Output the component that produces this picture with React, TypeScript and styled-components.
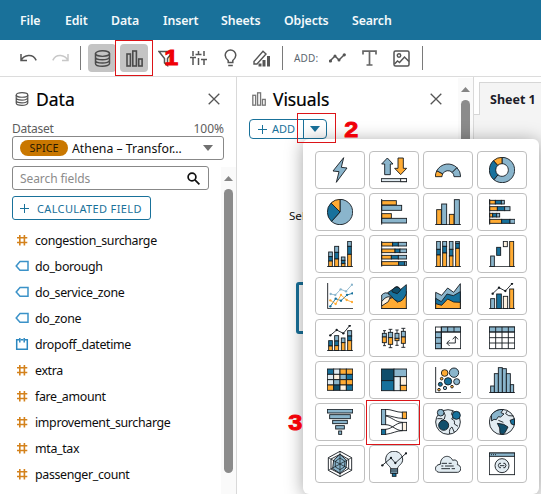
import React from "react";
import styled, { createGlobalStyle } from "styled-components";

const L = "#8ab5cc";
const D = "#17719c";
const N = "#104e6b";
const O = "#ffab33";
const W = "#e2ecf2";
const C = "#fdf1e0";
const K = "#151b20";
const blue = "#19719a";

const Global = createGlobalStyle`
  * { box-sizing: border-box; }
  body { margin: 0; background: #fff; font-family: "Noto Sans", "Open Sans", sans-serif; overflow: hidden; }
`;

const Page = styled.div`
  position: relative;
  width: 541px;
  height: 494px;
  display: flex;
  flex-direction: column;
  overflow: hidden;
  color: #0d0d0d;
`;
const MenuBar = styled.nav`
  height: 40px;
  flex: none;
  background: ${blue};
  display: flex;
  align-items: center;
  padding: 2px 0 0 20px;
`;
const MenuItem = styled.span<{ $w: number }>`
  width: ${(p) => p.$w}px;
  flex: none;
  font-size: 12.3px;
  font-weight: 600;
  line-height: 18px;
  letter-spacing: -0.1px;
  color: #f4f9fb;
`;
const Toolbar = styled.div`
  height: 37px;
  flex: none;
  border-bottom: 1px solid #dcdcdc;
  display: flex;
  align-items: center;
  padding-left: 16px;
`;
const Tool = styled.span<{ $w: number; $on?: boolean; $gap?: number }>`
  width: ${(p) => p.$w}px;
  height: 28px;
  flex: none;
  margin-right: ${(p) => p.$gap ?? 0}px;
  border-radius: 4px;
  display: flex;
  align-items: center;
  justify-content: center;
  background: ${(p) => (p.$on ? "#c4c4c4" : "transparent")};
`;
const Rule = styled.span<{ $gap: number }>`
  width: 1px;
  height: 24px;
  background: #7a7a7a;
  margin-right: ${(p) => p.$gap}px;
`;
const AddLabel = styled.span`
  width: 34px;
  font-size: 10px;
  letter-spacing: 0.2px;
  color: #5c6670;
`;
const Body = styled.div`
  flex: 1;
  display: flex;
  min-height: 0;
`;
const Panel = styled.section<{ $w: number }>`
  position: relative;
  width: ${(p) => p.$w}px;
  flex: none;
  border-right: 1px solid #d9d9d9;
`;
const PanelHead = styled.header<{ $pad: string }>`
  height: 44px;
  display: flex;
  align-items: center;
  padding: ${(p) => p.$pad};
`;
const Title = styled.h2<{ $ls: number }>`
  margin: 0 auto 0 7px;
  font-size: 17.5px;
  font-weight: 400;
  line-height: 24px;
  letter-spacing: ${(p) => p.$ls}px;
  color: #000;
  -webkit-text-stroke: 0.2px #000;
`;
const DatasetLine = styled.div`
  display: flex;
  justify-content: space-between;
  padding: 0 12px;
  height: 15px;
  font-size: 12px;
  line-height: 15px;
  color: #5d5d5d;
`;
const DatasetLabel = styled.span`
  letter-spacing: -0.25px;
`;
const Select = styled.div`
  margin: 0 12px;
  height: 24px;
  border: 1px solid #888;
  border-radius: 3px;
  display: flex;
  align-items: center;
  padding: 0 10px 0 7px;
  font-size: 12.3px;
`;
const Spice = styled.span`
  width: 48px;
  height: 16px;
  border-radius: 8px;
  background: #c97700;
  color: #2b1a00;
  font-size: 10.8px;
  line-height: 15px;
  text-align: center;
  margin-right: 4px;
`;
const Chosen = styled.span`
  flex: 1;
  white-space: nowrap;
`;
const Search = styled.div`
  margin: 6px 0 6px 12px;
  width: 197px;
  height: 24px;
  border: 1px solid #888;
  border-radius: 3px;
  display: flex;
  align-items: center;
  justify-content: space-between;
  padding: 0 8px 0 7px;
  font-size: 12px;
  letter-spacing: -0.08px;
  color: #8b8b8b;
`;
const Outlined = styled.button`
  margin: 0 0 0 12px;
  width: 139px;
  height: 24px;
  border: 1px solid ${blue};
  border-radius: 3px;
  background: #fff;
  color: ${blue};
  padding: 0 0 0 7px;
  display: flex;
  align-items: center;
  font: 11px "Noto Sans", sans-serif;
  letter-spacing: 0.36px;
  white-space: nowrap;
`;
const Plus = styled.svg`
  margin-right: 8px;
  flex: none;
`;
const Fields = styled.ul`
  list-style: none;
  margin: 0;
  padding: 7px 0 0 15px;
`;
const Field = styled.li`
  height: 26px;
  display: flex;
  align-items: center;
  gap: 6px;
  font-size: 12.4px;
  letter-spacing: -0.34px;
`;
const ScrollTrack = styled.div<{ $top: number }>`
  position: absolute;
  right: 0;
  top: ${(p) => p.$top}px;
  bottom: 0;
  width: 15px;
  background: #fafafa;
  display: flex;
  flex-direction: column;
  align-items: center;
`;
const Thumb = styled.div<{ $h: number }>`
  width: 9px;
  flex: none;
  height: ${(p) => p.$h}px;
  margin-top: 8px;
  border-radius: 5px;
  background: #8b8b8b;
`;
const SplitButton = styled.div`
  margin: -2px 0 0 12px;
  width: 78px;
  height: 20px;
  border: 1px solid ${blue};
  border-radius: 4px;
  display: flex;
  align-items: center;
  color: ${blue};
  font-size: 11px;
`;
const SplitMain = styled.span`
  width: 54px;
  height: 18px;
  line-height: 18px;
  border-right: 1px solid ${blue};
  display: flex;
  align-items: center;
  padding-left: 8px;
  gap: 5px;
`;
const SplitDrop = styled.span`
  flex: 1;
  display: flex;
  justify-content: center;
`;
const Hint = styled.p`
  margin: 68px 0 0 52px;
  font-size: 11.6px;
  line-height: 18px;
`;
const EmptyVisual = styled.div`
  margin: 57px 0 0 59px;
  width: 150px;
  height: 52px;
  border: 3px solid ${blue};
  border-radius: 3px;
`;
const SheetArea = styled.main`
  flex: 1;
  display: flex;
  flex-direction: column;
  background: #f4f4f4;
`;
const TabStrip = styled.div`
  height: 38px;
  display: flex;
  background: #fff;
  align-items: flex-end;
`;
const TabLead = styled.div`
  width: 5px;
  height: 1px;
  background: #d6d6d6;
`;
const Tab = styled.div`
  flex: 1;
  height: 33px;
  background: #f4f4f4;
  border: solid #d6d6d6;
  border-width: 1px 0 0 1px;
  padding-left: 10px;
  font-size: 12.5px;
  font-weight: 700;
  line-height: 33px;
  white-space: nowrap;
  color: #1c1c28;
`;
const Picker = styled.div`
  position: absolute;
  left: 303px;
  top: 139px;
  width: 236px;
  height: 355px;
  background: #fff;
  border-radius: 6px;
  box-shadow: 0 2px 18px rgba(0, 0, 0, 0.36);
  padding: 12px;
  display: grid;
  grid-template-columns: repeat(4, 50px);
  grid-auto-rows: 38px;
  gap: 4px;
  align-content: start;
`;
const Choice = styled.button`
  border: 1px solid #bfbfbf;
  border-radius: 4px;
  background: #fff;
  padding: 0;
  display: flex;
  align-items: center;
  justify-content: center;
`;
const Mark = styled.div<{ $x: number; $y: number; $w: number; $h: number }>`
  position: absolute;
  left: ${(p) => p.$x}px;
  top: ${(p) => p.$y}px;
  width: ${(p) => p.$w}px;
  height: ${(p) => p.$h}px;
  border: 1px solid #dc1418;
`;
const Step = styled.span<{ $x: number; $y: number }>`
  position: absolute;
  left: ${(p) => p.$x}px;
  top: ${(p) => p.$y}px;
  font: bold 22.5px/24px "Liberation Sans", Arial, sans-serif;
  color: #f00008;
  -webkit-text-stroke: 0.9px #f00008;
  transform: scaleX(1.12);
`;

const Database = ({ s, c }: { s: number; c: string }) => (
  <svg width={s} height={s} viewBox="0 0 16 16" fill="none" stroke={c} strokeWidth="1.4">
    <ellipse cx="8" cy="3.4" rx="6.6" ry="2.6" />
    <path d="M1.4 3.4v9.2c0 3.5 13.2 3.5 13.2 0V3.4M1.4 6.6c0 3.5 13.2 3.5 13.2 0M1.4 9.7c0 3.5 13.2 3.5 13.2 0" />
  </svg>
);
const Bars = ({ w, h, c }: { w: number; h: number; c: string }) => (
  <svg width={w} height={h} viewBox="0 0 17 17" fill="none" stroke={c} strokeWidth="1.6">
    <rect x="1" y="4" width="3.4" height="12" />
    <rect x="6.8" y="1" width="3.6" height="15" />
    <rect x="12.7" y="9" width="3.4" height="7" />
  </svg>
);
const Close = () => (
  <svg width="12" height="12" viewBox="0 0 12 12" stroke="#555" strokeWidth="1.3">
    <path d="M.7.7l10.6 10.6M11.3.7L.7 11.3" />
  </svg>
);
const Undo = ({ flip }: { flip?: boolean }) => (
  <svg width="17" height="10" viewBox="0 0 17 10" fill="none" stroke={flip ? "#c8c8c8" : "#555"} strokeWidth="1.5">
    <g transform={flip ? "translate(17 0) scale(-1 1)" : undefined}>
      <path d="M1 1v6.600h6M1.200 7.200C4 1.800 12.800 0 16.200 7.400" />
    </g>
  </svg>
);
const Caret = ({ w, h, c }: { w: number; h: number; c: string }) => (
  <svg width={w} height={h} viewBox="0 0 10 6" preserveAspectRatio="none" fill={c}>
    <path d="M0 0h10L5 6z" />
  </svg>
);
const ScrollUp = () => (
  <svg width="9" height="14" viewBox="0 0 9 14" fill="#858585">
    <path d="M0 14l4.500-5 4.500 5z" />
  </svg>
);

const FieldIcon = ({ kind }: { kind: string }) => {
  if (kind === "num")
    return (
      <svg width="14" height="14" viewBox="0 0 14 14" stroke="#d4821c" strokeWidth="1.6">
        <path d="M4.800 2v10.500M9.400 2v10.500M2 4.800h10.300M2 9.500h10.300" />
      </svg>
    );
  if (kind === "text")
    return (
      <svg width="14" height="14" viewBox="0 0 14 14" fill="none" stroke="#3b92c8" strokeWidth="1.5">
        <path d="M5 2.600h8v8.600H5L1.200 6.900z" />
      </svg>
    );
  return (
    <svg width="14" height="14" viewBox="0 0 14 14" fill="none" stroke="#2c88c0" strokeWidth="1.5">
      <path d="M4 2.800H1.700v9.500h10.600V2.800H10M5.800 2.800h2.400M4.800 1v4.400M9.200 1v4.400" />
    </svg>
  );
};

type Box = [number, number, number, number, string];
const Rects = ({ items }: { items: Box[] }) => (
  <>
    {items.map(([x, y, w, h, f], i) => (
      <rect key={i} x={x} y={y} width={w} height={h} fill={f} />
    ))}
  </>
);
const arc = (r0: number, r1: number, a: number, b: number, cx = 39, cy = 39) => {
  const pt = (r: number, t: number) =>
    `${cx + r * Math.sin((t * Math.PI) / 180)} ${cy - r * Math.cos((t * Math.PI) / 180)}`;
  const big = b - a > 180 ? 1 : 0;
  return `M${pt(r1, a)}A${r1} ${r1} 0 ${big} 1 ${pt(r1, b)}L${pt(r0, b)}A${r0} ${r0} 0 ${big} 0 ${pt(r0, a)}Z`;
};
const Dots = ({ pts, c, r = 3.5 }: { pts: string; c: string; r?: number }) => (
  <>
    <polyline points={pts} stroke={c} fill="none" />
    {pts.split(" ").map((p) => {
      const [x, y] = p.split(",");
      return <circle key={p} cx={x} cy={y} r={r} fill={c} stroke="none" />;
    })}
  </>
);
const Base = () => <path d="M0 77H78" />;
const Axis = () => <path d="M2 0V77H78" fill="none" />;

const heat = [D, W, O, O, W, C, L, D, W, L, O, O, O, N, C, D];

const charts: React.ReactNode[] = [
  <polygon points="50,2 18,42 36,44 28,76 60,33 43,31" fill={L} />,
  <>
    <path d="M19 3L36 21H28V53H11V21H2z" fill={L} />
    <path d="M51 3h16v31h10L59 53 41 34h10z" fill={O} />
    <Rects items={[[1, 65, 76, 9, W], [59, 65, 18, 9, "#fff"]]} />
  </>,
  <>
    <path d={arc(18, 38, 270, 298, 39, 59)} fill={O} />
    <path d={arc(18, 38, 298, 405, 39, 59)} fill={L} />
    <path d={arc(18, 38, 45, 90, 39, 59)} fill={L} />
  </>,
  <>
    <path d={arc(19, 38, 0, 220)} fill={L} />
    <path d={arc(19, 38, 220, 318)} fill={D} />
    <path d={arc(19, 38, 318, 360)} fill={O} />
  </>,
  <>
    <path d={arc(0, 38, 0, 222)} fill={L} />
    <path d={arc(0, 38, 222, 315)} fill={D} />
    <path d={arc(0, 38, 315, 360)} fill={O} />
  </>,
  <>
    <Rects items={[[2, 5, 44, 13, O], [2, 19, 60, 15, L], [2, 44, 29, 14, O], [2, 58, 75, 14, L]]} />
    <path d="M2 0V77" />
  </>,
  <>
    <Rects items={[[5, 32, 14, 45, O], [20, 15, 15, 62, L], [43, 46, 14, 31, O], [58, 2, 15, 75, L]]} />
    <Base />
  </>,
  <>
    <Rects items={[[2, 4, 17, 11, O], [19, 4, 18, 11, D], [37, 4, 9, 11, L], [2, 23, 23, 12, O], [25, 23, 22, 12, D], [47, 23, 16, 12, L], [2, 43, 9, 11, O], [11, 43, 12, 11, D], [23, 43, 9, 11, L], [2, 61, 36, 12, O], [38, 61, 25, 12, D], [63, 61, 15, 12, L]]} />
    <path d="M2 0V77" />
  </>,
  <>
    <Rects items={[[5, 33, 11, 14, L], [5, 47, 11, 14, D], [5, 60, 11, 17, O], [23, 16, 12, 18, L], [23, 34, 12, 20, D], [23, 54, 12, 23, O], [43, 48, 11, 10, L], [43, 58, 11, 10, D], [43, 68, 11, 9, O], [62, 1, 11, 15, L], [62, 16, 11, 24, D], [62, 40, 11, 37, O]]} />
    <Base />
  </>,
  <>
    <Rects items={[[2, 4, 33, 11, O], [35, 4, 17, 11, D], [52, 4, 25, 11, L], [2, 24, 40, 11, O], [42, 24, 15, 11, D], [57, 24, 20, 11, L], [2, 43, 29, 11, O], [31, 43, 21, 11, D], [52, 43, 25, 11, L], [2, 62, 51, 11, O], [53, 62, 18, 11, D], [71, 62, 6, 11, L]]} />
    <path d="M2 0V77" />
  </>,
  <>
    <Rects items={[[5, 1, 11, 24, L], [5, 25, 11, 17, D], [5, 42, 11, 35, O], [23, 1, 12, 15, L], [23, 16, 12, 20, D], [23, 36, 12, 41, O], [43, 1, 11, 24, L], [43, 25, 11, 20, D], [43, 45, 11, 32, O], [62, 1, 11, 6, L], [62, 7, 11, 15, D], [62, 22, 11, 55, O]]} />
    <Base />
  </>,
  <>
    <Rects items={[[5, 45, 11, 32, L], [23, 19, 12, 24, D], [43, 1, 12, 16, C], [62, 1, 12, 76, O]]} />
    <Base />
  </>,
  <>
    <Axis />
    <Dots pts="11,33 25,36 41,19 57,25 75,5" c={L} />
    <Dots pts="10,70 26,47 42,53 60,36 76,31" c={D} />
    <Dots pts="10,52 26,63 42,36 59,51 75,57" c={O} />
  </>,
  <>
    <path d="M2 77V56L19 48 35 44 50 58 76 25V77z" fill={O} />
    <path d="M2 56V36Q14 24 24 34L32 43 19 48z" fill={L} />
    <path d="M20 29L38 17Q50 3 58 20L76 5V32Q66 56 52 56Q39 53 29 37z" fill={D} />
    <path d="M33 22Q46 4 60 20L49 32 34 27z" fill={N} />
    <path d="M2 56Q15 38 28 42L22 56 2 69z" fill={C} />
    <Base />
  </>,
  <>
    <path d="M2 28L20 37 38 15 56 28 76 2V65L2 77z" fill={L} />
    <path d="M2 46L19 56 36 33 55 38 76 26V77H2z" fill={D} />
    <path d="M2 62L20 67 38 48 56 57 76 58V77H2z" fill={O} />
    <Base />
  </>,
  <>
    <Rects items={[[5, 47, 12, 30, L], [23, 33, 14, 44, D], [43, 40, 13, 37, C], [62, 18, 12, 59, O]]} />
    <Dots pts="11,32 30,14 49,24 69,2" c={K} />
    <Base />
  </>,
  <>
    <Rects items={[[5, 47, 11, 16, D], [5, 63, 11, 14, O], [23, 32, 12, 16, L], [23, 48, 12, 14, D], [23, 62, 12, 15, O], [43, 39, 11, 14, L], [43, 53, 11, 24, O], [62, 17, 12, 16, L], [62, 33, 12, 14, D], [62, 47, 12, 30, O]]} />
    <Dots pts="10,31 29,15 49,25 68,2" c={K} />
    <Base />
  </>,
  <>
    <path d="M10 17V62M28 13V68M48 15V61M67 10V67M6 17h9M23 13h11M43 15h10M61 10h12M6 62h9M23 68h11M43 61h10M61 67h12" />
    <Rects items={[[4, 25, 12, 11, L], [4, 36, 12, 17, O], [22, 22, 13, 16, L], [22, 38, 13, 20, O], [42, 25, 12, 15, L], [42, 40, 12, 7, O], [61, 19, 12, 17, L], [61, 36, 12, 19, O]]} />
  </>,
  <>
    <Rects items={[[1, 6, 76, 65, "#fff"], [19, 6, 58, 15, L], [1, 21, 18, 50, L]]} />
    <path d="M19 6V71M38 6V21M57 6V21M1 21H77M1 38H19M1 55H19M61 35V54H36M53 43L61 34 69 43M44 46L35 54 44 63" fill="none" />
  </>,
  <>
    <Rects items={[[1, 6, 76, 65, "#fff"], [1, 6, 76, 15, L]]} />
    <path d="M1 21H77M1 38H77M1 54H77M20 6V71M39 6V71M58 6V71" />
  </>,
  <Rects items={heat.map((f, i) => [1 + (i % 4) * 19, 6 + Math.floor(i / 4) * 16, 19, 16, f] as Box)} />,
  <Rects items={[[1, 6, 38, 35, N], [1, 41, 38, 30, D], [39, 6, 38, 23, L], [39, 29, 19, 42, W], [58, 29, 19, 26, C], [58, 55, 19, 16, O]]} />,
  <>
    <Axis />
    {([[29, 18, 10, O], [57, 17, 14, L], [20, 35, 4, O], [39, 43, 11, D], [65, 44, 9, L], [16, 52, 6, D], [30, 63, 5, L], [51, 59, 4, O], [12, 68, 4, O]] as [number, number, number, string][]).map(([x, y, r, f]) => (
      <circle key={`${x}-${y}`} cx={x} cy={y} r={r} fill={f} />
    ))}
  </>,
  <>
    <Rects items={[[5, 57, 11, 20, L], [16, 20, 12, 57, L], [28, 2, 12, 75, L], [40, 5, 12, 72, L], [52, 20, 12, 57, L], [64, 53, 10, 24, L]]} />
    <Base />
  </>,
  <Rects items={[[1, 1, 76, 11, L], [8, 17, 62, 12, L], [17, 34, 44, 10, L], [26, 50, 26, 10, L], [35, 66, 9, 10, L]]} />,
  <>
    <path d="M14 1C32 1 46 10 64 10M14 19C34 21 46 28 64 28M14 21C32 24 44 40 64 40M14 47C34 47 44 65 64 65M14 61C34 60 44 41 64 41M14 76C34 74 46 65 64 65" fill="none" />
    <Rects items={[[1, 1, 13, 46, L], [1, 61, 13, 16, D], [64, 9, 13, 20, O], [64, 40, 13, 25, C]]} />
  </>,
  <>
    <circle cx="39" cy="39" r="37" fill={W} />
    <path d="M25 7Q35 19 28 30L17 36M53 5Q45 17 55 23L50 30Q61 33 58 45L69 52M44 75Q41 59 51 54L58 70M7 29L22 29" fill="none" />
    <circle cx="17" cy="11" r="10" fill={L} />
    <circle cx="64" cy="19" r="12" fill={D} />
    <circle cx="26" cy="49" r="15" fill={N} />
  </>,
  <>
    <circle cx="39" cy="39" r="38" fill={W} />
    <path d="M7 18Q19 1 43 1L36 11 45 15 35 24 28 23 22 32 15 31 8 36z" fill={L} />
    <path d="M25 43L44 46 57 54 49 69 43 76 33 73 32 57z" fill={N} />
    <path d="M77 29L63 34 67 45 76 48z" fill={D} />
    <path d="M55 5L50 14 59 20 74 21M28 34l15 6" fill="none" />
  </>,
  <>
    <path d="M39 1L74 20V58L39 77 4 58V20zM39 10L65 25V53L39 68 12 54V24z" fill="#fff" />
    <path d="M39 10L59 28 57 51 39 67 17 53 20 27z" fill={L} />
    <path d="M39 1V77M4 20L74 58M74 20L4 58M39 21L54 31 52 48 39 56 25 48V31z" fill="none" strokeWidth="2.200" />
  </>,
  <>
    <path d="M30 54C27 43 12 40 14 24C17-7 61-7 65 24C66 40 51 42 49 54z" fill={W} />
    <Rects items={[[29, 54, 21, 13, L], [34, 67, 11, 9, D]]} />
    <path d="M29 60H50" />
    <Dots pts="4,43 30,21 43,36 75,7" c={K} />
  </>,
  <>
    <path d="M14 64C-3 64-3 41 16 40C16 14 44 8 53 28C64 24 70 32 67 41C81 43 80 64 67 64z" fill={W} />
    <path d="M20 37H36M41 37H50M19 45H25M30 45H56M19 53H45M50 53H60" />
  </>,
  <>
    <Rects items={[[1, 6, 76, 65, "#fff"], [1, 6, 76, 10, L]]} />
    <circle cx="39" cy="44" r="21" fill={W} />
    <path d="M6 11h3M12 11h3M18 11h3M36 37h-5Q25 43 31 50h5M43 37h5Q54 43 48 50h-5M33 44H46" fill="none" />
  </>,
];

const fields: [string, string][] = [
  ["num", "congestion_surcharge"],
  ["text", "do_borough"],
  ["text", "do_service_zone"],
  ["text", "do_zone"],
  ["date", "dropoff_datetime"],
  ["num", "extra"],
  ["num", "fare_amount"],
  ["num", "improvement_surcharge"],
  ["num", "mta_tax"],
  ["num", "passenger_count"],
];

export default function App() {
  return (
    <>
      <Global />
      <Page>
        <MenuBar>
          <MenuItem $w={45}>File</MenuItem>
          <MenuItem $w={46}>Edit</MenuItem>
          <MenuItem $w={52}>Data</MenuItem>
          <MenuItem $w={58}>Insert</MenuItem>
          <MenuItem $w={63}>Sheets</MenuItem>
          <MenuItem $w={68}>Objects</MenuItem>
          <MenuItem $w={50}>Search</MenuItem>
        </MenuBar>
        <Toolbar>
          <Tool $w={24} $gap={8}><Undo /></Tool>
          <Tool $w={24} $gap={8}><Undo flip /></Tool>
          <Rule $gap={7} />
          <Tool $w={28} $gap={4} $on><Database s={17} c="#4b4b4b" /></Tool>
          <Tool $w={28} $gap={4} $on><Bars w={17} h={17} c="#4b4b4b" /></Tool>
          <Tool $w={28} $gap={4}>
            <svg width="16" height="17" viewBox="0 0 16 17" fill="none" stroke="#555" strokeWidth="1.5">
              <path d="M1 1.500h14L9.500 8.500V15.500L6.500 13V8.500z" />
            </svg>
          </Tool>
          <Tool $w={28} $gap={4}>
            <svg width="17" height="16" viewBox="0 0 17 16" stroke="#555" strokeWidth="1.5">
              <path d="M3 1v5M0 7.500h6M3 7.500V15M8.500 1v4M5.500 4.500h6M8.500 8V15M14 1v5M11 9.500h6M14 9.500V15" />
            </svg>
          </Tool>
          <Tool $w={28} $gap={4}>
            <svg width="13" height="18" viewBox="0 0 13 18" fill="none" stroke="#555" strokeWidth="1.5">
              <path d="M4.200 13.500V11.500C2.500 10 1.200 8.500 1.200 6.200a5.300 5.300 0 0110.600 0c0 2.300-1.300 3.800-3 5.300v2zM4.200 16.500h4.600" />
            </svg>
          </Tool>
          <Tool $w={28} $gap={6}>
            <svg width="18" height="17" viewBox="0 0 18 17" fill="none" stroke="#555" strokeWidth="1.4">
              <path d="M1 11.500L10 1.300 13 4 4 14H1z" />
              <path d="M7 16.500v-3M11 16.500V10M15.500 16.500V6" strokeWidth="3" />
            </svg>
          </Tool>
          <Rule $gap={11} />
          <AddLabel>ADD:</AddLabel>
          <Tool $w={18} $gap={15}>
            <svg width="17" height="10" viewBox="0 0 17 10" fill="none" stroke="#555" strokeWidth="1.5">
              <path d="M1.500 7.500L6 3l4 4 5.500-5.500" />
              <g fill="#555" stroke="none">
                <circle cx="1.500" cy="8" r="1.600" />
                <circle cx="6" cy="3" r="1.500" />
                <circle cx="10" cy="7" r="1.500" />
                <circle cx="15.300" cy="1.800" r="1.600" />
              </g>
            </svg>
          </Tool>
          <Tool $w={17} $gap={15}>
            <svg width="15" height="16" viewBox="0 0 15 16" fill="none" stroke="#666" strokeWidth="1.7">
              <path d="M1 4.500V1.200h13v3.300M7.500 1.200V15M4.500 15h6" />
            </svg>
          </Tool>
          <Tool $w={17} $gap={12}>
            <svg width="17" height="17" viewBox="0 0 17 17" fill="none" stroke="#555" strokeWidth="1.5">
              <rect x="1" y="1" width="15" height="15" rx="1.500" />
              <circle cx="6" cy="5.500" r="1.700" />
              <path d="M1.500 14l3-3 2 1.500L11.500 7l4.500 4.500" />
            </svg>
          </Tool>
          <Rule $gap={0} />
        </Toolbar>
        <Body>
          <Panel $w={237}>
            <PanelHead $pad="0 16px 0 15px">
              <Database s={14} c="#555" />
              <Title $ls={0}>Data</Title>
              <Close />
            </PanelHead>
            <DatasetLine><DatasetLabel>Dataset</DatasetLabel><span>100%</span></DatasetLine>
            <Select>
              <Spice>SPICE</Spice>
              <Chosen>Athena – Transfor…</Chosen>
              <Caret w={10} h={6} c="#707070" />
            </Select>
            <Search>
              Search fields
              <svg width="13" height="13" viewBox="0 0 13 13" fill="none" stroke="#111" strokeWidth="1.7">
                <circle cx="5" cy="5" r="3.900" /><path d="M7.900 7.900l4.500 4.500" />
              </svg>
            </Search>
            <Outlined>
              <Plus width="9" height="9" viewBox="0 0 9 9" stroke={blue}><path d="M0 4.500h9M4.500 0v9" /></Plus>
              CALCULATED FIELD
            </Outlined>
            <Fields>
              {fields.map(([kind, name]) => (
                <Field key={name}><FieldIcon kind={kind} />{name}</Field>
              ))}
            </Fields>
            <ScrollTrack $top={90}>
              <ScrollUp />
              <Thumb $h={284} />
            </ScrollTrack>
          </Panel>
          <Panel $w={237}>
            <PanelHead $pad="0 31px 0 15px">
              <Bars w={14} h={14} c="#777" />
              <Title $ls={-0.1}>Visuals</Title>
              <Close />
            </PanelHead>
            <SplitButton>
              <SplitMain>
                <svg width="9" height="9" viewBox="0 0 9 9" stroke={blue}><path d="M0 4.500h9M4.500 0v9" /></svg>
                ADD
              </SplitMain>
              <SplitDrop><Caret w={10} h={6} c={blue} /></SplitDrop>
            </SplitButton>
            <Hint>Select a visual</Hint>
            <EmptyVisual />
            <ScrollTrack $top={1}>
              <ScrollUp />
              <Thumb $h={200} />
            </ScrollTrack>
          </Panel>
          <SheetArea>
            <TabStrip><TabLead /><Tab>Sheet 1</Tab></TabStrip>
          </SheetArea>
        </Body>
        <Picker>
          {charts.map((drawing, i) => (
            <Choice key={i}>
              <svg width="26" height="26" viewBox="0 0 78 78" stroke={K} strokeWidth="2.7">{drawing}</svg>
            </Choice>
          ))}
        </Picker>
        <Mark $x={115} $y={40} $w={38} $h={36} />
        <Mark $x={297} $y={113} $w={39} $h={30} />
        <Mark $x={366} $y={400} $w={54} $h={45} />
        <Step $x={165} $y={46}>1</Step>
        <Step $x={345} $y={118}>2</Step>
        <Step $x={289} $y={411}>3</Step>
      </Page>
    </>
  );
}
